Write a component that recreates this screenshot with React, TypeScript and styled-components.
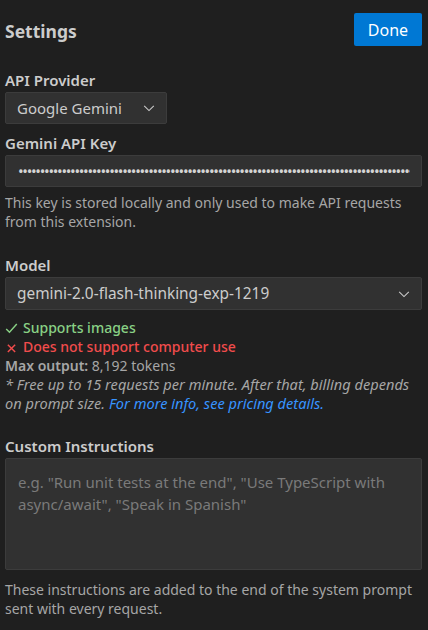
import React from "react";
import styled, { createGlobalStyle } from "styled-components";

const GlobalStyle = createGlobalStyle`
    html, body {
        margin: 0;
        padding: 0;
        background: #1f1f1f;
    }
    body {
        font-family: "Noto Sans", "Open Sans", sans-serif;
        color: #cccccc;
        font-size: 14px;
    }
`;

const Page = styled.div`
    padding: 13px 6px 0 5px;
    display: flex;
    flex-direction: column;
`;

const Header = styled.div`
    display: flex;
    align-items: center;
    justify-content: space-between;
    margin-bottom: 25px;
`;

const Title = styled.h3`
    margin: 3px 0 0;
    font-size: 17.5px;
    font-weight: 700;
    color: #cccccc;
`;

const DoneButton = styled.button`
    width: 68px;
    height: 33px;
    border: none;
    border-radius: 2px;
    background: #0078d4;
    color: #ffffff;
    font-family: inherit;
    font-size: 16px;
    padding: 0;
`;

const Section = styled.div<{ gap?: number }>`
    display: flex;
    flex-direction: column;
    margin-bottom: ${(p) => p.gap ?? 0}px;
`;

const Label = styled.label`
    font-size: 15px;
    font-weight: 600;
    line-height: 18px;
    margin-bottom: 3px;
`;

const Select = styled.div<{ full?: boolean }>`
    box-sizing: border-box;
    display: flex;
    align-items: center;
    justify-content: space-between;
    width: ${(p) => (p.full ? "100%" : "162px")};
    height: ${(p) => (p.full ? 33 : 32)}px;
    padding: 0 10px 0 11px;
    background: #313131;
    border: 1px solid #3c3c3c;
    border-radius: 2px;
    font-size: ${(p) => (p.full ? 15.4 : 15)}px;
    color: #cccccc;
`;

const Chevron = () => (
    <svg width="14" height="14" viewBox="0 0 16 16" fill="none">
        <path d="M2.5 5.5 L8 11 L13.5 5.5" stroke="#cccccc" strokeWidth="1.2" />
    </svg>
);

const KeyInput = styled.div`
    box-sizing: border-box;
    height: 32px;
    background: #313131;
    border: 1px solid #3c3c3c;
    border-radius: 2px;
    padding: 0 11px 0 12px;
    display: flex;
    align-items: center;
`;

const KeyDots = styled.span`
    flex: 1;
    overflow: hidden;
    white-space: nowrap;
    color: #d4d4d4;
    font-size: 15px;
    line-height: 18px;
    letter-spacing: -1.3px;
`;

const Help = styled.p<{ italic?: boolean; top?: number }>`
    margin: ${(p) => p.top ?? 0}px 0 0;
    font-size: ${(p) => (p.italic ? 14.6 : 14)}px;
    line-height: ${(p) => (p.italic ? 19 : 18.5)}px;
    color: #a6a6a6;
    font-style: ${(p) => (p.italic ? "italic" : "normal")};
`;

const Link = styled.a`
    color: #3794ff;
    text-decoration: none;
`;

const Info = styled.div<{ tone: "ok" | "bad" | "plain" }>`
    display: flex;
    align-items: center;
    gap: 5px;
    font-size: 14px;
    line-height: 18.75px;
    font-weight: ${(p) => (p.tone === "plain" ? 400 : 500)};
    color: ${(p) => (p.tone === "ok" ? "#89d185" : p.tone === "bad" ? "#f14c4c" : "#a6a6a6")};
`;

const InfoList = styled.div`
    display: flex;
    flex-direction: column;
    margin-top: 9px;
`;

const Strong = styled.span`
    font-weight: 600;
`;

const TextArea = styled.div`
    box-sizing: border-box;
    height: 112px;
    background: #313131;
    border: 1px solid #3c3c3c;
    border-radius: 2px;
    padding: 12px 12px;
    font-size: 15px;
    line-height: 22px;
    color: #7a7a7a;
`;

const Check = () => (
    <svg width="13" height="13" viewBox="0 0 16 16" fill="none">
        <path d="M1.5 8.5 L5.5 12.5 L14.5 2.5" stroke="#89d185" strokeWidth="1.8" />
    </svg>
);

const Cross = () => (
    <svg width="13" height="13" viewBox="0 0 16 16" fill="none">
        <path d="M3.5 4.5 L12.5 13.5 M12.5 4.5 L3.5 13.5" stroke="#f14c4c" strokeWidth="1.8" />
    </svg>
);

const App = () => {
    const dots = "•".repeat(100);
    return (
        <Page>
            <GlobalStyle />
            <Header>
                <Title>Settings</Title>
                <DoneButton>Done</DoneButton>
            </Header>

            <Section gap={10}>
                <Label>API Provider</Label>
                <Select>
                    <span>Google Gemini</span>
                    <Chevron />
                </Select>
            </Section>

            <Section gap={25}>
                <Label>Gemini API Key</Label>
                <KeyInput>
                    <KeyDots>{dots}</KeyDots>
                </KeyInput>
                <Help top={7}>
                    This key is stored locally and only used to make API requests from this extension.
                </Help>
            </Section>

            <Section gap={24}>
                <Label>Model</Label>
                <Select full>
                    <span>gemini-2.0-flash-thinking-exp-1219</span>
                    <Chevron />
                </Select>
                <InfoList>
                    <Info tone="ok"><Check />Supports images</Info>
                    <Info tone="bad"><Cross />Does not support computer use</Info>
                    <Info tone="plain"><span><Strong>Max output:</Strong> 8,192 tokens</span></Info>
                    <Help italic>
                        * Free up to 15 requests per minute. After that, billing depends on prompt size.{" "}
                        <Link>For more info, see pricing details.</Link>
                    </Help>
                </InfoList>
            </Section>

            <Section>
                <Label>Custom Instructions</Label>
                <TextArea>
                    e.g. "Run unit tests at the end", "Use TypeScript with async/await", "Speak in Spanish"
                </TextArea>
                <Help top={11}>
                    These instructions are added to the end of the system prompt sent with every request.
                </Help>
            </Section>
        </Page>
    );
};

export default App;
